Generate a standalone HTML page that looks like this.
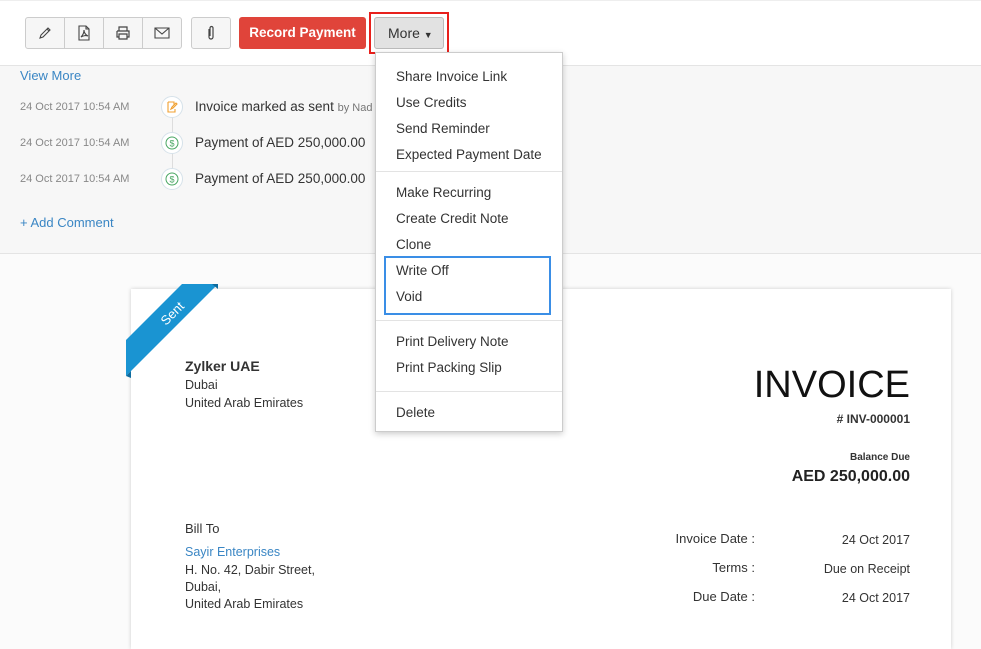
<!DOCTYPE html>
<html><head><meta charset="utf-8"><style>
*{margin:0;padding:0;box-sizing:border-box}
body{width:981px;height:626px;overflow:hidden;position:relative;font-family:"Liberation Sans",sans-serif;background:#fbfbfb;color:#222}
.a{position:absolute;white-space:nowrap}
.top{position:absolute;left:0;top:0;width:981px;height:66px;background:#fff;border-bottom:1px solid #e4e4e4;border-top:1px solid #eee}
.act{position:absolute;left:0;top:66px;width:981px;height:188px;background:#f7f7f7;border-bottom:1px solid #e4e4e4}
.btn{position:absolute;top:17px;height:32px;border:1px solid #ccc;background:#f6f6f6;display:flex;align-items:center;justify-content:center}
.ts{font-size:11px;color:#888}
.msg{font-size:13.5px;color:#333}
.ic{position:absolute;width:22px;height:22px;border-radius:50%;border:1px solid #d6e2ea;background:#fff;display:flex;align-items:center;justify-content:center}
.menu{position:absolute;left:375px;top:52px;width:188px;height:380px;background:#fff;border:1px solid #ccc;box-shadow:0 2px 6px rgba(0,0,0,.2)}
.mi{position:absolute;left:20px;font-size:13.5px;color:#333}
.hr{position:absolute;left:0;width:186px;height:1px;background:#e3e3e3}
.card{position:absolute;left:131px;top:289px;width:820px;height:360px;background:#fff;box-shadow:0 0 4px rgba(0,0,0,.18)}
.c{font-size:12.5px;color:#333}
</style></head><body>
<div class="top"></div>
<div class="btn" style="left:25px;width:40px;border-radius:3px 0 0 3px"><svg width="16" height="16" viewBox="0 0 16 16" fill="none" stroke="#444" stroke-width="1.1"><path d="M3 13l1-3 7-7 2 2-7 7-3 1zM10 4l2 2"/></svg></div>
<div class="btn" style="left:64px;width:40px"><svg width="14" height="16" viewBox="0 0 14 16" fill="none" stroke="#444" stroke-width="1.1"><path d="M2 1h7l3 3v11H2zM9 1v3h3M4 12c2-2 3-5 3-7 0 3 2 5 4 6-3-1-5 0-7 1z"/></svg></div>
<div class="btn" style="left:103px;width:40px"><svg width="16" height="16" viewBox="0 0 16 16" fill="none" stroke="#444" stroke-width="1.2"><path d="M4 6V2h8v4M2 6h12v6h-2M4 12H2V6M4 9h8v5H4z"/></svg></div>
<div class="btn" style="left:142px;width:40px;border-radius:0 3px 3px 0"><svg width="16" height="14" viewBox="0 0 16 14" fill="none" stroke="#444" stroke-width="1.1"><path d="M1 2h14v10H1zM1 2l7 6 7-6"/></svg></div>
<div class="btn" style="left:191px;width:40px;border-radius:3px"><svg width="10" height="16" viewBox="0 0 10 16" fill="none" stroke="#444" stroke-width="1.2"><path d="M3 4v8a2 2 0 004 0V3a1.5 1.5 0 00-3 0v8"/></svg></div>
<div class="a" style="left:239px;top:17px;width:127px;height:32px;background:#e0443a;border-radius:3px;color:#fff;font-weight:bold;font-size:13.5px;line-height:32px;text-align:center">Record Payment</div>
<div class="a" style="left:369px;top:12px;width:80px;height:42px;border:2px solid #e8201c"></div>
<div class="a" style="left:374px;top:17px;width:70px;height:32px;background:#e2e2e2;border:1px solid #bbb;border-radius:3px;font-size:14px;line-height:30px;padding-left:13px;color:#333">More <span style="font-size:9px">▼</span></div>
<div class="act"></div>
<div class="a" style="left:20px;top:68px;font-size:13px;color:#3a86c4">View More</div>
<div class="a" style="left:172px;top:117px;width:1px;height:70px;background:#ddd"></div>
<div class="a ts" style="left:20px;top:101px">24 Oct 2017 10:54 AM</div>
<div class="ic" style="left:161px;top:96px"><svg width="12" height="12" viewBox="0 0 12 12" fill="none" stroke="#f0a030" stroke-width="1.1"><path d="M2 1h6v3M2 1v10h7V8M5 8l1-2 4-4 1 1-4 4z"/></svg></div>
<div class="a msg" style="left:195px;top:99px">Invoice marked as sent <span style="font-size:11px;color:#777">by Nad</span></div>
<div class="a ts" style="left:20px;top:137px">24 Oct 2017 10:54 AM</div>
<div class="ic" style="left:161px;top:132px"><svg width="14" height="14" viewBox="0 0 14 14"><circle cx="7" cy="7" r="6" fill="none" stroke="#4aa763"/><text x="7" y="10.5" font-size="9" text-anchor="middle" fill="#4aa763" font-family="Liberation Sans">$</text></svg></div>
<div class="a msg" style="left:195px;top:135px">Payment of AED 250,000.00</div>
<div class="a ts" style="left:20px;top:173px">24 Oct 2017 10:54 AM</div>
<div class="ic" style="left:161px;top:168px"><svg width="14" height="14" viewBox="0 0 14 14"><circle cx="7" cy="7" r="6" fill="none" stroke="#4aa763"/><text x="7" y="10.5" font-size="9" text-anchor="middle" fill="#4aa763" font-family="Liberation Sans">$</text></svg></div>
<div class="a msg" style="left:195px;top:171px">Payment of AED 250,000.00</div>
<div class="a" style="left:20px;top:215px;font-size:13px;color:#3a86c4">+ Add Comment</div>

<div class="card"></div>
<svg class="a" style="left:0;top:0" width="300" height="400"><polygon points="126,340 182,284 218,284 126,376" fill="#1a94d2"/><polygon points="126,376 131,371 131,378" fill="#0e6b9e"/><polygon points="212,284 218,284 218,289" fill="#0e6b9e"/><text x="0" y="0" transform="translate(166,326) rotate(-45)" fill="#fff" font-size="13" font-family="Liberation Sans">Sent</text></svg>
<div class="a" style="left:185px;top:358px;font-size:14px;font-weight:bold;color:#333">Zylker UAE</div>
<div class="a c" style="left:185px;top:378px">Dubai</div>
<div class="a c" style="left:185px;top:396px">United Arab Emirates</div>
<div class="a" style="right:71px;top:364px;font-size:38px;color:#111">INVOICE</div>
<div class="a" style="right:71px;top:412px;font-size:12px;font-weight:bold;color:#333"># INV-000001</div>
<div class="a" style="right:71px;top:452px;font-size:10px;font-weight:bold;color:#333">Balance Due</div>
<div class="a" style="right:71px;top:468px;font-size:16px;font-weight:bold;color:#222">AED 250,000.00</div>
<div class="a" style="left:185px;top:521px;font-size:13px;color:#333">Bill To</div>
<div class="a" style="left:185px;top:545px;font-size:12.5px;color:#3a86c4">Sayir Enterprises</div>
<div class="a c" style="left:185px;top:563px">H. No. 42, Dabir Street,</div>
<div class="a c" style="left:185px;top:580px">Dubai,</div>
<div class="a c" style="left:185px;top:597px">United Arab Emirates</div>
<div class="a" style="right:226px;top:531px;font-size:13px;color:#333">Invoice Date :</div>
<div class="a" style="right:226px;top:560px;font-size:13px;color:#333">Terms :</div>
<div class="a" style="right:226px;top:589px;font-size:13px;color:#333">Due Date :</div>
<div class="a c" style="right:71px;top:533px">24 Oct 2017</div>
<div class="a c" style="right:71px;top:562px">Due on Receipt</div>
<div class="a c" style="right:71px;top:591px">24 Oct 2017</div>

<div class="menu">
<div class="mi" style="top:16px">Share Invoice Link</div>
<div class="mi" style="top:42px">Use Credits</div>
<div class="mi" style="top:68px">Send Reminder</div>
<div class="mi" style="top:94px">Expected Payment Date</div>
<div class="hr" style="top:118px"></div>
<div class="mi" style="top:132px">Make Recurring</div>
<div class="mi" style="top:158px">Create Credit Note</div>
<div class="mi" style="top:184px">Clone</div>
<div class="mi" style="top:210px">Write Off</div>
<div class="mi" style="top:236px">Void</div>
<div class="a" style="left:8px;top:203px;width:167px;height:59px;border:2px solid #3a8ee6"></div>
<div class="hr" style="top:267px"></div>
<div class="mi" style="top:281px">Print Delivery Note</div>
<div class="mi" style="top:307px">Print Packing Slip</div>
<div class="hr" style="top:338px"></div>
<div class="mi" style="top:352px">Delete</div>
</div>
</body></html>
